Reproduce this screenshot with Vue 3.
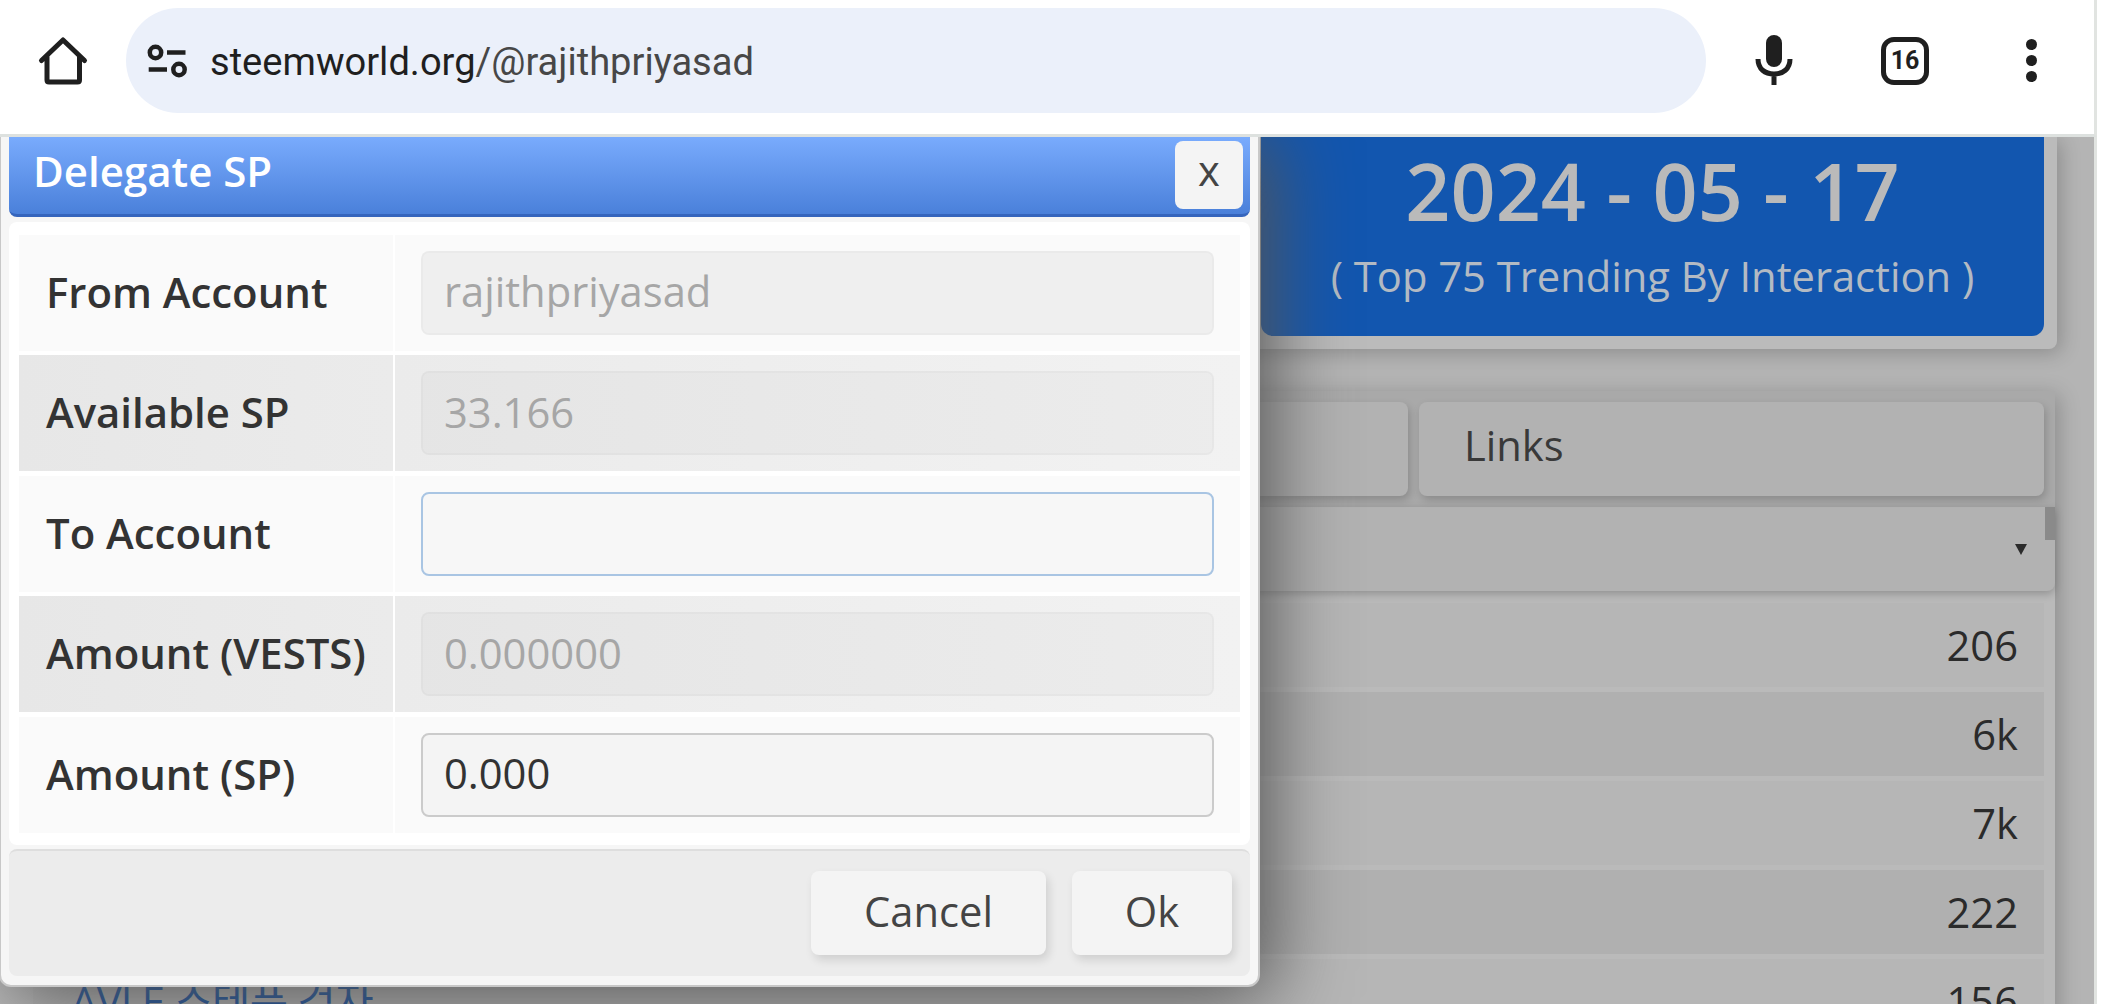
<template>
  <div class="screen">
    <header class="toolbar">
      <svg class="icon-home" viewBox="0 0 52 52" aria-hidden="true">
        <path d="M4.500 25.500 26 5 47.500 25.500M10 21.500V45Q10 47 12 47H40.500Q42.500 47 42.500 45V21.500" />
      </svg>

      <div class="address-bar">
        <svg class="icon-tune" viewBox="0 0 40 36" aria-hidden="true">
          <circle cx="8.500" cy="9.500" r="5.700" />
          <path d="M20 9.500H38.500M1.700 26.500H20" />
          <circle cx="32" cy="26.500" r="5.700" />
        </svg>
        <span class="url">{{ host }}<span class="url-path">{{ path }}</span></span>
      </div>

      <svg class="icon-mic" viewBox="0 0 38 52" aria-hidden="true">
        <rect x="11" y="0" width="16" height="32" rx="8" />
        <path d="M3 24C3 34 10 39 19 39S35 34 35 24M19 39V50" />
      </svg>

      <div class="tab-count">16</div>

      <div class="menu-dots">
        <i v-for="n in 3" :key="n"></i>
      </div>
    </header>

    <main class="page">
      <section class="date-card">
        <div class="date-banner">
          <div class="date">2024 - 05 - 17</div>
          <div class="subtitle">( Top 75 Trending By Interaction )</div>
        </div>
      </section>

      <section class="list-card">
        <div class="tabs">
          <div class="tab"></div>
          <div class="tab">Links</div>
        </div>
        <div class="list-head">
          <span class="arrow"></span>
          <span class="scroll-thumb"></span>
        </div>
        <div class="list">
          <div v-for="row in rows" :key="row.value" class="list-row">
            <span class="list-name">{{ row.name }}</span>
            <span>{{ row.value }}</span>
          </div>
        </div>
      </section>

      <div class="dialog">
        <div class="dialog-title">
          <span>Delegate SP</span>
          <button class="close">x</button>
        </div>

        <div class="dialog-body">
          <div v-for="field in fields" :key="field.label" class="field">
            <label class="field-label">{{ field.label }}</label>
            <div class="field-value">
              <input
                v-model="field.value"
                type="text"
                :class="{ active: field.active }"
                :disabled="field.disabled"
              />
            </div>
          </div>
        </div>

        <div class="dialog-footer">
          <button class="btn cancel">Cancel</button>
          <button class="btn ok">Ok</button>
        </div>
      </div>
    </main>
  </div>
</template>

<script setup>
import { ref } from 'vue'

const host = 'steemworld.org'
const path = '/@rajithpriyasad'

const fields = ref([
  { label: 'From Account', value: 'rajithpriyasad', disabled: true },
  { label: 'Available SP', value: '33.166', disabled: true },
  { label: 'To Account', value: '', active: true },
  { label: 'Amount (VESTS)', value: '0.000000', disabled: true },
  { label: 'Amount (SP)', value: '0.000' },
])

const rows = [
  { name: '', value: '206' },
  { name: '', value: '6k' },
  { name: '', value: '7k' },
  { name: '', value: '222' },
  { name: 'AVLE 스테픈 걷자', value: '156' },
]
</script>

<style>
body {
  margin: 0;
  background: #fff;
}
</style>

<style scoped>
.screen {
  width: 2107px;
  height: 1004px;
  overflow: hidden;
  background: #fff;
  color: #2b2b2b;
  font-family: 'Open Sans', 'Noto Sans CJK KR', sans-serif;
  font-size: 41.700px;
  line-height: 58px;
}

.screen * {
  box-sizing: border-box;
}

/* browser toolbar */
.toolbar {
  display: flex;
  align-items: center;
  box-sizing: border-box;
  width: 2097px;
  height: 137px;
  padding: 0 55px 13px 37px;
  border-right: 3px solid #e1e4e1;
  border-bottom: 3px solid #dde1df;
}

.toolbar svg {
  flex: none;
  fill: none;
  stroke: #1f1f1f;
  stroke-width: 5;
}

.icon-home {
  width: 52px;
  height: 52px;
  stroke-linecap: round;
  stroke-linejoin: round;
}

.address-bar {
  display: flex;
  align-items: center;
  flex: none;
  width: 1580px;
  height: 105px;
  margin-left: 37px;
  padding-left: 21px;
  border-radius: 53px;
  background: #ebf0fa;
}

.toolbar .icon-tune {
  width: 40px;
  height: 36px;
  stroke-width: 4.500;
}

.url {
  margin: 2px 0 0 23px;
  color: #1f1f1f;
  font-family: Roboto, sans-serif;
  font-size: 38.100px;
}

.url-path {
  color: #474747;
}

.icon-mic {
  width: 38px;
  height: 52px;
  margin-left: 49px;
}

.icon-mic rect {
  fill: #1f1f1f;
  stroke: none;
}

.tab-count {
  flex: none;
  width: 48px;
  height: 48px;
  margin-left: 88px;
  border: 5px solid #1f1f1f;
  border-radius: 13px;
  color: #1f1f1f;
  font-family: Roboto, sans-serif;
  font-size: 25px;
  font-weight: 700;
  line-height: 38px;
  text-align: center;
}

.menu-dots {
  display: flex;
  flex-direction: column;
  gap: 5px;
  margin-left: 97px;
}

.menu-dots i {
  width: 11px;
  height: 11px;
  border-radius: 50%;
  background: #1f1f1f;
}

/* dimmed page */
.page {
  position: relative;
  box-sizing: border-box;
  width: 2097px;
  height: 867px;
  overflow: hidden;
  border-right: 3px solid #e1e4e1;
  background: #b4b4b4;
}

.date-card {
  width: 2057px;
  height: 212px;
  padding: 0 13px 13px 1261px;
  border-radius: 0 0 8px 0;
  background: #bbb;
  box-shadow: 4px 4px 20px rgba(0, 0, 0, 0.22);
}

.date-banner {
  height: 199px;
  border-radius: 0 0 12px 12px;
  background: #1256af;
  color: #bababa;
  text-align: center;
}

.date {
  margin-bottom: 2px;
  font-size: 79px;
  font-weight: 600;
  line-height: 108px;
}

.subtitle {
  color: #b3bac3;
}

.list-card {
  width: 2055px;
  height: 700px;
  margin-top: 42px;
  background: #bababa;
  box-shadow: 4px 4px 20px rgba(0, 0, 0, 0.22);
}

.tabs {
  display: flex;
  gap: 11px;
  height: 116px;
  padding: 11px 11px 11px 1100px;
  background: #a9a9a9;
}

.tab {
  width: 308px;
  height: 94px;
  border-radius: 8px;
  background: #b2b2b2;
  box-shadow: 2px 4px 9px rgba(0, 0, 0, 0.18);
  color: #393939;
  line-height: 86px;
}

.tab + .tab {
  flex: 1;
  padding-left: 45px;
}

.list-head {
  display: flex;
  align-items: flex-start;
  justify-content: flex-end;
  height: 84px;
  border-radius: 0 0 8px 0;
  background: #b2b2b2;
  box-shadow: 0 3px 8px rgba(0, 0, 0, 0.22);
}

.arrow {
  margin: 37px 18px 0 0;
  border: 6px solid transparent;
  border-top: 11px solid #2b2b2b;
  border-bottom: 0;
}

.scroll-thumb {
  width: 10px;
  height: 33px;
  background: #8a8a8a;
}

.list {
  display: flex;
  flex-direction: column;
  gap: 5px;
  padding: 12px 11px 0 33px;
}

.list-row {
  display: flex;
  justify-content: space-between;
  height: 84px;
  padding: 0 26px 0 38px;
  background: #b6b6b6;
  line-height: 84px;
}

.list-row:nth-child(even) {
  background: #b0b0b0;
}

.list-name {
  color: #0a489e;
  letter-spacing: -0.700px;
}

/* delegation dialog */
.dialog {
  position: absolute;
  top: -14px;
  left: -1px;
  width: 1261px;
  height: 864px;
  padding: 12px 8px 8px;
  border: 2px solid #c8c8c8;
  border-radius: 12px;
  background: #f6f6f6;
  box-shadow: 12px 12px 80px #555;
}

.dialog-title {
  display: flex;
  align-items: flex-start;
  justify-content: space-between;
  height: 80px;
  padding: 4px 7px 0 24px;
  border-bottom: 3px solid #3565bd;
  border-radius: 0 0 8px 8px;
  background: linear-gradient(#79abfd, #4a80da);
  color: #fff;
  font-size: 42px;
  font-weight: 600;
  line-height: 60px;
}

button {
  padding: 0;
  border: 0;
  border-radius: 8px;
  background: #f4f4f4;
  color: #444;
  font-family: inherit;
  font-size: 41.700px;
}

.close {
  width: 68px;
  height: 68px;
  padding-bottom: 10px;
  line-height: 58px;
}

.dialog-body {
  display: flex;
  flex-direction: column;
  gap: 4.500px;
  height: 623px;
  margin-top: 5px;
  padding: 12.800px 10px 12.200px;
  border-radius: 8px;
  background: #fff;
}

.field {
  display: flex;
  flex: 1;
  gap: 2px;
}

.field-label,
.field-value {
  background: #fafafa;
}

.field-label {
  width: 374px;
  padding-left: 27px;
  color: #333;
  font-size: 41.900px;
  font-weight: 600;
  line-height: 113px;
}

.field-value {
  flex: 1;
  padding: 16px 26px;
}

.field:nth-child(even) .field-label {
  background: linear-gradient(90deg, #e7e7e7, #ebebeb);
}

.field:nth-child(even) .field-value {
  background: linear-gradient(90deg, #ebebeb, #f2f2f2);
}

input {
  width: 100%;
  height: 84px;
  padding: 0 21px 4px;
  border: 2px solid #cbcbcb;
  border-radius: 8px;
  outline: none;
  background: #f4f4f4;
  color: #333;
  font-family: inherit;
  font-size: 41.700px;
}

input.active {
  border-color: #a9c5e3;
  background: #f7f7f7;
}

input:disabled {
  border-color: rgba(0, 0, 0, 0.025);
  background: rgba(0, 0, 0, 0.045);
  color: #a6a6a6;
}

.field:nth-child(even) input:disabled {
  background: rgba(0, 0, 0, 0.025);
}

.dialog-footer {
  display: flex;
  justify-content: flex-end;
  gap: 26px;
  height: 127px;
  margin-top: 4px;
  padding: 20px 18px 0;
  border-top: 2px solid #dedede;
  border-radius: 8px;
  background: #ececec;
}

.btn {
  height: 84px;
  padding-bottom: 5px;
  box-shadow: 3px 5px 10px rgba(0, 0, 0, 0.12);
}

.cancel {
  width: 235px;
}

.ok {
  width: 160px;
}
</style>
